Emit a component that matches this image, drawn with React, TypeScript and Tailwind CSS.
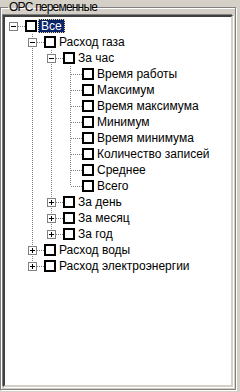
import React from 'react'

type Row = {
  label: string
  btn?: '+' | '-'
  guides: boolean[]
  up: boolean
  down: boolean
  selected?: boolean
}

const leaf = (label: string, last = false): Row => ({
  label,
  guides: [false, true, true],
  up: true,
  down: !last,
})

const rows: Row[] = [
  { label: 'Все', btn: '-', guides: [], up: false, down: false, selected: true },
  { label: 'Расход газа', btn: '-', guides: [false], up: true, down: true },
  { label: 'За час', btn: '-', guides: [false, true], up: true, down: true },
  leaf('Время работы'),
  leaf('Максимум'),
  leaf('Время максимума'),
  leaf('Минимум'),
  leaf('Время минимума'),
  leaf('Количество записей'),
  leaf('Среднее'),
  leaf('Всего', true),
  { label: 'За день', btn: '+', guides: [false, true], up: true, down: true },
  { label: 'За месяц', btn: '+', guides: [false, true], up: true, down: true },
  { label: 'За год', btn: '+', guides: [false, true], up: true, down: false },
  { label: 'Расход воды', btn: '+', guides: [false], up: true, down: true },
  { label: 'Расход электроэнергии', btn: '+', guides: [false], up: true, down: false },
]

const dot = { stroke: '#808080', strokeWidth: 1, strokeDasharray: '1 1' }

function Guide({ on }: { on: boolean }) {
  return (
    <svg width="19" height="16" className="shrink-0">
      {on && <line x1="9.5" y1="0" x2="9.5" y2="16" {...dot} />}
    </svg>
  )
}

function Connector({ row }: { row: Row }) {
  return (
    <svg width="21" height="16" className="shrink-0">
      {row.up && <line x1="9.5" y1="0" x2="9.5" y2="8" {...dot} />}
      {row.down && <line x1="9.5" y1="8" x2="9.5" y2="16" {...dot} />}
      <line x1="10" y1="8.5" x2="21" y2="8.5" {...dot} />
      {row.btn && (
        <g>
          <rect x="5.5" y="4.5" width="8" height="8" fill="#fff" stroke="#808080" />
          <line x1="7" y1="8.5" x2="12" y2="8.5" stroke="#000" />
          {row.btn === '+' && <line x1="9.5" y1="6" x2="9.5" y2="11" stroke="#000" />}
        </g>
      )}
    </svg>
  )
}

function TreeRow({ row }: { row: Row }) {
  return (
    <div className="flex items-center h-[16px]">
      {row.guides.map((g, i) => (
        <Guide key={i} on={g} />
      ))}
      <Connector row={row} />
      <div className="w-[12px] h-[12px] border-2 border-black bg-white shrink-0" />
      {row.selected ? (
        <span className="ml-[1px] px-[2px] h-[14px] leading-[12px] bg-[#0a246a] text-white border border-dotted border-[#f5db95]">
          {row.label}
        </span>
      ) : (
        <span className="ml-[3px] whitespace-nowrap">{row.label}</span>
      )}
    </div>
  )
}

export default function App() {
  return (
    <div
      className="w-[240px] h-[392px] bg-[#d4d0c8] text-black text-[12px] overflow-hidden"
      style={{ fontFamily: '"Liberation Sans", Arial, sans-serif' }}
    >
      <fieldset className="w-[236px] h-[390px] border border-[#808080] shadow-[inset_1px_1px_0_#fff,1px_1px_0_#fff] px-[1px] pb-0 pt-0 m-0">
        <legend className="ml-[6px] px-[1px] leading-[14px] text-[12px] tracking-[-0.8px]">OPC переменные</legend>
        <div className="ml-[1px] mt-[1px] w-[230px] h-[372px] border-2 border-t-[#404040] border-l-[#404040] border-b-[#d4d0c8] border-r-[#d4d0c8] shadow-[-1px_-1px_0_#808080,1px_1px_0_#fff] bg-white overflow-hidden">
          <div className="pt-[1px] -ml-[1px]">
            {rows.map((r, i) => (
              <TreeRow key={i} row={r} />
            ))}
          </div>
        </div>
      </fieldset>
    </div>
  )
}
